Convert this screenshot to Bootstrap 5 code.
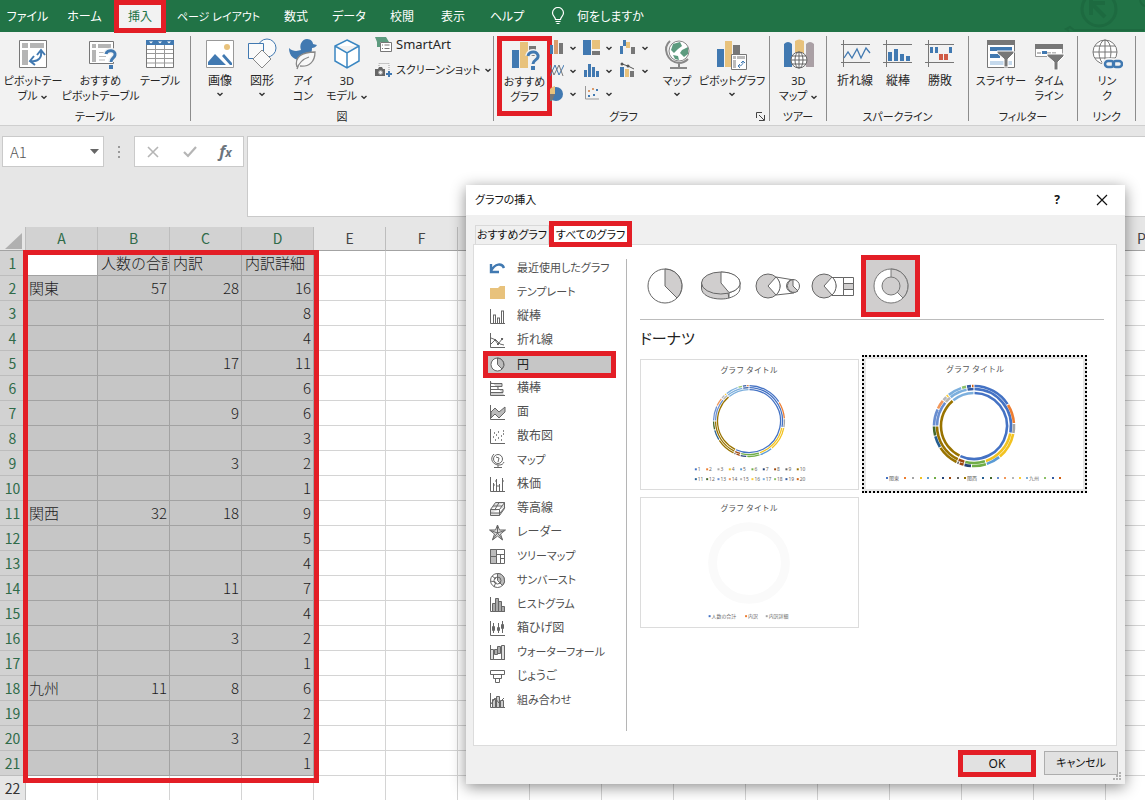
<!DOCTYPE html>
<html lang="ja">
<head>
<meta charset="utf-8">
<meta name="viewport" content="width=device-width, initial-scale=1">
<title>グラフの挿入</title>
<link href="https://cdn.jsdelivr.net/npm/bootstrap@5.3.0/dist/css/bootstrap.min.css" rel="stylesheet">
<style>
:root{--mark-red:#e31e26;--blue:#4179b1;--sand:#e8c27c;--gray:#7f7f7f}
body{font:12px/15px "Noto Sans","Noto Sans CJK JP",sans-serif;font-feature-settings:"palt";color:#262626;background:#e6e6e6;height:100vh;overflow:hidden}
button,input,textarea{font:inherit;color:inherit;font-feature-settings:inherit}
button{background:none;border:0;padding:0}
svg{display:block;flex:none}
button.kana,span.kana{font-size:11px}
/* ribbon tabs */
.menu-strip{background:#217346;height:32px;color:#fff;display:grid;grid-template-columns:55px 59px 52px 105px 50px 56px 50px 52px 56px 1fr auto}
.menu-strip button{height:32px;text-align:center;white-space:nowrap}
.menu-strip .tab-on{height:33px;border:5px solid var(--mark-red);background:#f2f2f2;color:#217346;position:relative}
/* ribbon */
.ribbon{background:#f2f2f2;height:94px;border-bottom:1px solid #cfcfcf}
.rgroup{border-right:1px solid #8c8c8c;margin-top:4px;height:85px;display:flex;flex-direction:column;position:relative}
.rgroup .tools{height:73px;flex:none;display:grid;justify-content:start;align-items:start}
.rgroup .glabel{text-align:center;height:16px;line-height:16px;font-size:11px}
.tool{display:flex;flex-direction:column;align-items:center;text-align:center;white-space:nowrap;padding-top:2px;margin:0 -4px}
.tool svg.big{width:32px;height:32px;margin-bottom:3px}
.hot{border:5px solid var(--mark-red);height:80px;margin:0;padding:0;overflow:hidden;background:#f2f2f2}
.hot svg.big{margin-top:-2px}
.mini{display:grid;grid-template-columns:29px 36px 36px;grid-auto-rows:23px}
.mini button{display:flex;align-items:center;justify-content:end;gap:5px;padding-right:4px}
.w1{width:191px}.w1 .tools{grid-template-columns:66px 69px 50px}
.w2{width:303px}.w2 .tools{grid-template-columns:42px 42px 40px 48px auto;padding-left:8px}
.w3{width:276px}.w3 .tools{grid-template-columns:55px 101px 48px 62px;padding-left:3px}
.w4{width:57px}.w4 .tools{grid-template-columns:57px}
.w5{width:142px}.w5 .tools{grid-template-columns:44px 42px 42px;padding-left:6px}
.w6{width:109px}.w6 .tools{grid-template-columns:48px 48px;padding-left:8px}
.w7{width:58px}.w7 .tools{grid-template-columns:58px}
.smart{font-size:13px}
/* formula bar */
.fbar{padding:10px 0 0 2px;height:101px}
.boxed{background:#fff;border:1px solid #cacaca}
.namebox{width:102px;height:31px}
.namebox input{width:70px;border:0;padding:0 0 0 7px;font-size:15px;color:#555;font-family:"Noto Sans CJK JP",sans-serif;font-weight:300}
.fxbox{width:110px;height:31px}
.formula{height:81px;resize:none;border-right:0;border-radius:0;margin-left:3px}
/* sheet */
.sheet{overflow:hidden;position:relative;flex:1 1 0;min-height:0;font-family:"Noto Sans CJK JP",sans-serif}
.grid{table-layout:fixed;width:1177px;border-collapse:separate;border-spacing:0;font-size:15px;font-weight:300;line-height:24px;font-feature-settings:normal;color:#1c1c1c}
.grid th,.grid td{height:25px;padding:0;border-right:1px solid #d4d4d4;border-bottom:1px solid #d4d4d4;overflow:hidden;white-space:nowrap;background:#fff}
.grid thead th{height:24px;line-height:23px;background:#e6e6e6;text-align:center;font-weight:400;border-color:#bdbdbd;border-bottom-color:#a3a3a3;font-size:14px;color:#444}
.grid thead th.sel,.grid tbody th.sel{background:#d2d2d2;color:#2f6b49}
.grid tbody th{background:#e6e6e6;font-weight:400;text-align:center;font-size:14px;color:#333;border-color:#bdbdbd}
.grid td.sel{background:#c6c6c6;border-color:#a2a2a2}
.grid td.num{text-align:right;padding-right:2px}
.grid td.txt{padding-left:3px}
.grid td.active-cell{background:#fff}
.frame-red{position:absolute;left:23px;top:23px;width:296px;height:533px;border:5px solid var(--mark-red);pointer-events:none}
/* dialog */
.dialog{position:absolute;left:466px;top:185px;width:659px;background:#f0f0f0;box-shadow:0 3px 14px rgba(0,0,0,.45);line-height:18px;color:#111}
.dlg-title{height:30px;background:#fff;padding:0 17px 0 9px}
.dlg-body{padding:6px 8px 5px 7px}
.dlg-tabs{height:23px;padding-left:2px;align-items:end}
.dlg-tabs .tab-off{border:1px solid #d9d9d9;border-bottom:0;height:19px;width:74px;line-height:18px;white-space:nowrap;font-size:11px}
.dlg-tabs .tab-sel{border:5px solid var(--mark-red);background:#fff;width:83px;height:26px;line-height:15px;position:relative;align-self:start;white-space:nowrap;font-size:11px}
.panel{background:#fff;border:1px solid #dcdcdc;height:502px}
.kinds{width:152px;padding:11px 10px 0 9px;margin:0}
.kinds button{display:flex;align-items:center;gap:11px;height:24px;width:133px;padding-left:6px;color:#505050;white-space:nowrap;text-align:left}
.kinds .on{border:5px solid var(--mark-red);background:#c6c6c6;height:27px;margin:-1px 0 -2px;padding-left:1px;color:#222}
.kinds svg{width:17px;height:17px}
.detail{margin-top:14px;height:472px;border-left:1px solid #b5b5b5;padding-left:13px;flex:1;padding-right:12px}
.subtypes{margin-top:-4px;display:grid;grid-template-columns:50px 62px 52px 57px 59px}
.subtypes button{display:flex;align-items:center;justify-content:center;height:62px}
.subtypes .on{border:5px solid var(--mark-red);background:#d0cece}
.rule{border-top:1px solid #bcbcbc;margin-top:2px}
.kind-name{font-size:15px;line-height:26px;margin:5px 0 4px;font-weight:400;color:#222}
.previews{display:grid;grid-template-columns:219px 225px;column-gap:3px}
.pv{height:138px;padding:4px 0;width:219px}
.pv svg,.pv-on svg{border:1px solid #dcdcdc;background:#fff;font-feature-settings:normal}
.pv-on{height:138px;width:225px;border:2px dotted #000;background:#e8e8e8;padding:2px}
.pv-on svg{width:217px;height:130px;border:0}
.dlg-foot{display:flex;justify-content:flex-end;gap:8px;padding-top:4px;margin-right:-1px;height:33px}
.dlg-foot button{background:#e1e1e1;border:1px solid #adadad;width:74px;height:24px;margin-top:1px}
.dlg-foot .ok{border:5px solid var(--mark-red);width:78px;height:27px;line-height:17px;margin-top:0}
.grip{position:absolute;right:3px;bottom:3px}
</style>
</head>
<body class="d-flex flex-column m-0">
<svg width="0" height="0" class="position-absolute">
<defs>
<symbol id="dd" viewBox="0 0 8 8"><path d="M1.500 3 4 5.300 6.500 3" fill="none" stroke="#333" stroke-width="1.400"/></symbol>
</defs>
</svg>

<nav class="menu-strip" aria-label="リボン">
  <button>ファイル</button><button>ホーム</button><button class="tab-on">挿入</button><button class="kana">ページ レイアウト</button><button>数式</button><button>データ</button><button>校閲</button><button>表示</button><button>ヘルプ</button>
  <button class="d-flex align-items-center gap-2 ps-3"><svg width="14" height="18" viewBox="0 0 14 18" fill="none" stroke="#fff" stroke-width="1.200"><path d="M4.500 12.500C4.500 10 1.500 9 1.500 6a5.500 5.500 0 0 1 11 0c0 3-3 4-3 6.500zM4.500 14.500h5M5.500 16.500h3"/></svg><span class="ps-1">何をしますか</span></button>
  <svg width="90" height="32" viewBox="0 0 90 32" fill="none" stroke="#1d6a40"><circle cx="44" cy="9" r="17" stroke-width="3"/><path d="M36 0v15M37 3h13M37 4l13 13" stroke-width="4"/><path d="M14 31l-3-2 4-2 4 3h70M85 0q1 5 5 6" stroke-width="2"/></svg>
</nav>

<header class="ribbon d-flex">
  <section class="rgroup w1"><div class="tools">
    <button class="tool kana"><svg class="big" viewBox="0 0 32 32"><path d="M2.500 2.500h27v27h-27z" fill="#fff" stroke="#777"/><path d="M5 5h6v5H5zM13 5h14v5H13zM5 12h6v15H5z" fill="#b5b5b5"/><path d="M14 23c8 1 11-4 10-10M20 17l4-5 4 5M17 18l-4 5 5 4" fill="none" stroke="#4179b1" stroke-width="2"/></svg>ピボットテー<br><span>ブル <svg class="d-inline" width="8" height="8"><use href="#dd"/></svg></span></button>
    <button class="tool kana"><svg class="big" viewBox="0 0 32 32"><path d="M4.500 3.500h24v22h-24z" fill="#fff" stroke="#777"/><path d="M7 6h4v4H7zM13 6h13v4H13zM7 12h4v12H7z" fill="#b5b5b5"/><path d="M14 14.500h7M14 18.500h7M14 22h6" stroke="#bbb"/><path d="M21 16c1-5 10-4 9 1-.4 3-4 3-4 7" fill="none" stroke="#f2f2f2" stroke-width="6"/><path d="M21 16c1-5 10-4 9 1-.4 3-4 3-4 7" fill="none" stroke="#4179b1" stroke-width="3"/><path d="M24 27h4v4h-4z" fill="#4179b1"/></svg>おすすめ<br>ピボットテーブル</button>
    <button class="tool kana"><svg class="big" viewBox="0 0 32 32"><path d="M2.500 2.500h27v27h-27z" fill="#fff" stroke="#777"/><path d="M2 2h28v5H2z" fill="#4179b1"/><path d="M5 3.500h4l-2 2zM14 3.500h4l-2 2zM23 3.500h4l-2 2z" fill="#fff"/><path d="M11.500 7v22M20.500 7v22M3 11.500h26M3 15.500h26M3 20.500h26M3 25h26" stroke="#999"/></svg>テーブル</button>
  </div><div class="glabel">テーブル</div></section>

  <section class="rgroup w2"><div class="tools">
    <button class="tool"><svg class="big" viewBox="0 0 32 32"><path d="M2.500 2.500h27v27h-27z" fill="#fff" stroke="#999"/><circle cx="23" cy="9" r="3" fill="#e8c27c"/><path d="M4 27v-3l7-8 11 11zM18 18l2-2 8 9v2h-2z" fill="#4179b1"/></svg>画像<svg width="8" height="12"><use href="#dd"/></svg></button>
    <button class="tool"><svg class="big" viewBox="0 0 32 32" fill="#fafafa" stroke="#4179b1"><circle cx="21" cy="10" r="9"/><path d="M2.500 5.500h15v15h-15z"/><path d="M16 12l9 9-9 9-9-9z" stroke="#888"/></svg>図形<svg width="8" height="12"><use href="#dd"/></svg></button>
    <button class="tool kana"><svg class="big" viewBox="0 0 32 32"><path d="M2 10c4 4 9 3 12 2-2-5 1-11 6-11 4 0 6 3 6 5l4 1c-1 2-3 3-5 3 0 4-1 7-4 10-6 4-19 3-19-10z" fill="#4179b1"/><path d="M10 29c-3-10 5-15 18-15 0 10-6 15-15 14M10 31c2-7 6-10 12-12" fill="#f8f8f8" stroke="#888" stroke-width="1.300"/></svg>アイ<br>コン</button>
    <button class="tool kana"><svg class="big" viewBox="0 0 32 32" fill="#fff" stroke="#3b87c2" stroke-width="1.500"><path d="M16 2l12 6v15l-12 7-12-7V8zM4 8l12 7 12-7M16 15v15"/></svg>3D<br><span>モデル <svg class="d-inline" width="8" height="8"><use href="#dd"/></svg></span></button>
    <div class="ps-1">
      <button class="d-flex align-items-center gap-1 smart pb-2"><svg width="17" height="17" viewBox="0 0 17 17"><path d="M0 1h11l3 5H5v5H2V6z" fill="#5d9b7f"/><path d="M5.500 6.500h11v9h-11z" fill="#fff" stroke="#777"/><path d="M7 9h1M9.500 9h5M7 12.500h1M9.500 12.500h5" stroke="#777"/></svg>SmartArt</button>
      <button class="d-flex align-items-center gap-1 text-nowrap kana"><svg width="17" height="17" viewBox="0 0 17 17"><path d="M4 5V2.500h10V10" fill="none" stroke="#999" stroke-dasharray="1 1"/><path d="M0 8h3l1-2h3l1 2h2v7H0z" fill="#666"/><circle cx="5.500" cy="11.500" r="2" fill="#eee" stroke="#999"/><path d="M11 13h6M14 10v6" stroke="#4179b1" stroke-width="2"/></svg>スクリーンショット <svg width="8" height="8"><use href="#dd"/></svg></button>
    </div>
  </div><div class="glabel">図</div></section>

  <section class="rgroup w3"><div class="tools">
    <button class="tool hot kana"><svg class="big" viewBox="0 0 32 32"><path d="M3 11h7v18H3z" fill="#4179b1"/><path d="M11 3h8v26h-8z" fill="#e8c27c"/><path d="M20 7h7v10h-7z" fill="#777"/><path d="M19 17c1-6 11-5 10 1-.4 3-5 3-5 7" fill="none" stroke="#f2f2f2" stroke-width="6"/><path d="M19 17c1-6 11-5 10 1-.4 3-5 3-5 7" fill="none" stroke="#4179b1" stroke-width="3"/><path d="M22 27h4v4h-4z" fill="#4179b1"/></svg>おすすめ<br>グラフ</button>
    <div class="mini">
      <button aria-label="縦棒"><svg width="14" height="17" viewBox="3 0 14 17"><path d="M2 6h4v9H2z" fill="#4179b1"/><path d="M7 1h4v14H7z" fill="#d99b6c"/><path d="M12 4h4v11h-4z" fill="#777"/></svg><svg width="8" height="8"><use href="#dd"/></svg></button>
      <button aria-label="階層"><svg width="17" height="17"><path d="M0 1h8v15H0z" fill="#4179b1"/><path d="M9 1h8v9H9z" fill="#e8c27c"/><path d="M9 12h8v4H9z" fill="#777"/></svg><svg width="8" height="8"><use href="#dd"/></svg></button>
      <button aria-label="ウォーターフォール"><svg width="17" height="17"><path d="M1 7h3v8H1zM4 1h3v6H4z" fill="#4179b1"/><path d="M7 3h4v6H7z" fill="#e8c27c"/><path d="M12 8h4v7h-4z" fill="#777"/></svg><svg width="8" height="8"><use href="#dd"/></svg></button>
      <button aria-label="折れ線"><svg width="14" height="17" fill="none"><path d="M0 14 5 3l4 10 5-10" stroke="#4179b1"/><path d="M0 3l4 10 5-10 4 11" stroke="#777"/></svg><svg width="8" height="8"><use href="#dd"/></svg></button>
      <button aria-label="統計"><svg width="17" height="17"><path d="M1 8h3v7H1zM5 2h3v13H5zM9 5h3v10H9zM13 9h3v6h-3z" fill="#4179b1"/></svg><svg width="8" height="8"><use href="#dd"/></svg></button>
      <button aria-label="複合"><svg width="17" height="17"><path d="M1 5h4v10H1z" fill="#4179b1"/><path d="M6 7h4v8H6z" fill="#e8c27c"/><path d="M11 9h4v6h-4z" fill="#777"/><path d="M3 2l6 2 6 3" stroke="#555" fill="none"/><circle cx="3" cy="2" r="1.500" fill="#555"/><circle cx="9" cy="4" r="1.500" fill="#555"/></svg><svg width="8" height="8"><use href="#dd"/></svg></button>
      <button aria-label="円"><svg width="14" height="17"><circle cx="6" cy="9" r="7" fill="#4179b1"/><path d="M5 9V1a8 8 0 0 0-5 3v5z" fill="#e8c27c"/><path d="M0 9h5l-3 7H0z" fill="#777"/></svg><svg width="8" height="8"><use href="#dd"/></svg></button>
      <button aria-label="散布図"><svg width="17" height="17"><path d="M2.500 1v13H16" fill="none" stroke="#999"/><path d="M5 10h2v2H5zM10 9h2v2h-2zM13 4h2v2h-2z" fill="#4179b1"/><path d="M5 5h2v2H5zM9 3h2v2H9z" fill="#d99b6c"/></svg><svg width="8" height="8"><use href="#dd"/></svg></button>
    </div>
    <button class="tool kana"><svg class="big" viewBox="0 0 32 32"><circle cx="18" cy="13" r="10" fill="#fff" stroke="#888"/><path d="M12 6l7-2 2 4-4 3-4 4-3-3zM21 12l6-3v7l-4 3-4-4zM12 17l5 1 1 4-4-1z" fill="#5d9b7f"/><path d="M9 3C1 10 6 24 18 25c4 0 7-2 9-4M18 25v4M9 30h17" fill="none" stroke="#888" stroke-width="2"/></svg>マップ<svg width="8" height="12"><use href="#dd"/></svg></button>
    <button class="tool kana"><svg class="big" viewBox="0 0 32 32"><path d="M1 11h7v18H1z" fill="#4179b1"/><path d="M9 3h7v26H9z" fill="#e8c27c"/><path d="M17 7h7v10h-7z" fill="#777"/><path d="M15.500 16.500h15v15h-15z" fill="#fff" stroke="#777"/><path d="M17 18h3v3h-3zM21 18h8v3h-8zM17 22h3v8h-3z" fill="#bbb"/><path d="M22 28c4 0 5-2 5-4M25 25l2-2 2 2M24 26l-2 2 2 2" fill="none" stroke="#4179b1"/></svg>ピボットグラフ<svg width="8" height="12"><use href="#dd"/></svg></button>
  </div><div class="glabel pe-3">グラフ</div>
  <svg class="position-absolute bottom-0 end-0 me-1" width="9" height="9" fill="none" stroke="#444"><path d="M.500 6V.500H6M3 3l5 5M8.500 3v5.500H3"/></svg></section>

  <section class="rgroup w4"><div class="tools">
    <button class="tool kana"><svg class="big" viewBox="0 0 32 32"><path d="M1 29V6q4-4 8 0v23z" fill="#4179b1"/><path d="M12 20V3q4-3 9 0v17z" fill="#e8c27c"/><path d="M23 29V6q4-4 8 0v23z" fill="#aaa0a5"/><g fill="#fff" stroke="#666"><circle cx="16" cy="22" r="8"/><ellipse cx="16" cy="22" rx="4" ry="8" fill="none"/><path d="M8 22h16M9 18h14M9 26h14M16 14v16"/></g></svg>3D<br><span>マップ <svg class="d-inline" width="8" height="8"><use href="#dd"/></svg></span></button>
  </div><div class="glabel">ツアー</div></section>

  <section class="rgroup w5"><div class="tools">
    <button class="tool"><svg class="big" viewBox="0 0 32 32" fill="none"><path d="M2 6.500h29M2 24.500h29M4.500 2v27" stroke="#777"/><path d="M5 20l4-6 4 6 5-9 4 9 5-10 4 5" stroke="#4179b1" stroke-width="1.300"/></svg>折れ線</button>
    <button class="tool"><svg class="big" viewBox="0 0 32 32"><path d="M1 6.500h29M1 24.500h29M4.500 2v27" stroke="#777"/><path d="M6 14h4v9H6zM12 11h4v12h-4zM18 16h4v7h-4zM24 18h4v5h-4z" fill="#4179b1"/></svg>縦棒</button>
    <button class="tool"><svg class="big" viewBox="0 0 32 32"><path d="M1 6.500h29M1 24.500h29M4.500 2v27" stroke="#777"/><path d="M6 9h3v6H6zM11 9h3v6h-3zM25 9h3v6h-3z" fill="#4179b1"/><path d="M15 16h4v6h-4zM20 16h4v6h-4z" fill="#cf5a45"/></svg>勝敗</button>
  </div><div class="glabel">スパークライン</div></section>

  <section class="rgroup w6"><div class="tools">
    <button class="tool kana"><svg class="big" viewBox="0 0 32 32"><path d="M2.500 2.500h27v27h-27z" fill="#fff" stroke="#777"/><path d="M2 2h28v5H2z" fill="#777"/><path d="M5 9h22v4H5zM5 16h10v4H5z" fill="#4179b1"/><path d="M5 23h22v4H5z" fill="#c5d9ec"/><path d="M12 13h17v2l-6 6v8h-4v-8l-7-6z" fill="#777" stroke="#fff"/></svg>スライサー</button>
    <button class="tool kana"><svg class="big" viewBox="0 0 32 32"><path d="M2.500 6.500h27v12h-27z" fill="#fff" stroke="#999"/><path d="M2 6h28v5H2z" fill="#777"/><path d="M4 14h4v2H4zM14 14h4v2h-4zM19 14h4v2h-4z" fill="#bbb"/><path d="M9 13h5v3H9z" fill="#4179b1"/><path d="M14 16h17v2l-6 6v8h-4v-8l-7-6z" fill="#777" stroke="#fff"/></svg>タイム<br>ライン</button>
  </div><div class="glabel">フィルター</div></section>

  <section class="rgroup w7"><div class="tools">
    <button class="tool kana"><svg class="big" viewBox="0 0 32 32" fill="none" stroke="#777"><circle cx="14" cy="14" r="12" fill="#fff"/><ellipse cx="14" cy="14" rx="6" ry="12"/><path d="M14 2v24M2 14h24M4 8h20M4 20h20"/><g stroke="#f2f2f2" stroke-width="6"><rect x="14" y="23" width="9" height="6" rx="3"/><rect x="22" y="23" width="9" height="6" rx="3"/></g><g stroke="#4179b1" stroke-width="2.500"><rect x="14" y="23" width="9" height="6" rx="3"/><rect x="22" y="23" width="9" height="6" rx="3"/></g></svg>リン<br>ク</button>
  </div><div class="glabel">リンク</div></section>
</header>

<div class="fbar d-flex align-items-start">
  <div class="boxed namebox d-flex align-items-center justify-content-between pe-1"><input value="A1" aria-label="名前ボックス"><svg width="9" height="9"><path d="M0 2h9L4.500 7z" fill="#666"/></svg></div>
  <svg width="30" height="31"><path d="M14 10h2v2h-2zM14 15h2v2h-2zM14 20h2v2h-2z" fill="#999"/></svg>
  <div class="boxed fxbox d-flex align-items-center justify-content-around">
    <button aria-label="キャンセル"><svg width="14" height="14" stroke="#b5b5b5" stroke-width="1.600"><path d="M2 2l10 10M12 2 2 12"/></svg></button>
    <button aria-label="入力"><svg width="14" height="14" fill="none" stroke="#b5b5b5" stroke-width="2.200"><path d="M1 7l4 4 8-9"/></svg></button>
    <button aria-label="関数の挿入" class="font-serif-fx text-secondary"><i class="fs-6 fw-bold font-monospace-0">f</i><i class="fw-bold">x</i></button>
  </div>
  <textarea class="boxed formula flex-grow-1" aria-label="数式バー"></textarea>
</div>

<main class="sheet"><table class="grid"><colgroup id="cols"></colgroup><thead><tr id="heads"></tr></thead><tbody id="cells"></tbody></table><div class="frame-red"></div></main>

<div class="dialog" role="dialog" aria-label="グラフの挿入">
  <div class="dlg-title d-flex align-items-center"><span class="me-auto kana">グラフの挿入</span>
    <button class="fw-bold me-4 pe-2" aria-label="ヘルプ">?</button>
    <button class="ms-1" aria-label="閉じる"><svg width="12" height="12" stroke="#111" stroke-width="1.200"><path d="M1 1l10 10M11 1 1 11"/></svg></button></div>
  <div class="dlg-body">
    <div class="dlg-tabs d-flex"><button class="tab-off">おすすめグラフ</button><button class="tab-sel">すべてのグラフ</button></div>
    <div class="panel d-flex">
      <div class="kinds" id="kinds"></div>
      <div class="detail">
        <div class="subtypes">
          <button aria-label="円"><svg width="36" height="36" stroke="#666" fill="#fff"><circle cx="18" cy="18" r="17"/><path d="M18 18V1a17 17 0 0 1 12 29z" fill="#d0cece"/></svg></button>
          <button aria-label="3-D 円"><svg width="42" height="32" viewBox="0 0 42 32" stroke="#666" fill="#d0cece"><path d="M1.500 13v5c0 7 9 11 19.500 11 3 0 6-.4 8-1l-1-5z"/><path d="M29 23v5c7-2 11-5.500 11-10v-5z" fill="#fff"/><ellipse cx="20.800" cy="13" rx="19.300" ry="11"/><path d="M21 13V2c11 0 19 5 19 11 0 4-4 8-11 9.500z" fill="#fff"/></svg></button>
          <button aria-label="補助円グラフ付き円"><svg width="46" height="28" viewBox="0 0 46 28" stroke="#666" fill="#d0cece"><circle cx="13" cy="14" r="12"/><path d="M13 14l8-9a12 12 0 0 1 0 18z" fill="#fff"/><path d="M21 5l18 3M21 23l18-2" fill="none"/><circle cx="38" cy="14" r="6.500" fill="#fff"/><path d="M38 14l5 5a6.500 6.500 0 1 1-5-11.500z"/></svg></button>
          <button aria-label="補助縦棒付き円"><svg width="44" height="28" viewBox="0 0 44 28" stroke="#666" fill="#d0cece"><circle cx="13" cy="14" r="12"/><path d="M13 14l8-9a12 12 0 0 1 0 18z" fill="#fff"/><path d="M21 5.500h12M21 23.500h12" fill="none"/><path d="M32.500 5.500h10v18h-10z" fill="#fff"/><path d="M32.500 11.500h10v6h-10z"/></svg></button>
          <button class="on" aria-label="ドーナツ"><svg width="36" height="36" stroke="#777" fill="#fff"><circle cx="18" cy="18" r="17"/><path d="M18 18V1a17 17 0 0 1 12 29z" fill="#d0cece"/><circle cx="18" cy="18" r="9" fill="#d0cece"/></svg></button>
        </div>
        <div class="rule"></div>
        <h2 class="kind-name">ドーナツ</h2>
        <div class="previews">
          <button class="pv" aria-label="ドーナツ 1"><svg id="chart1" width="219" height="131" viewBox="0 0 219 131"></svg></button>
          <button class="pv-on" aria-label="ドーナツ 2"><svg id="chart2" width="217" height="130" viewBox="0 0 217 130"></svg></button>
          <button class="pv" aria-label="ドーナツ 3"><svg id="chart3" width="219" height="131" viewBox="0 0 219 131"></svg></button>
        </div>
      </div>
    </div>
    <div class="dlg-foot"><button class="ok">OK</button><button class="kana">キャンセル</button></div>
  </div>
  <svg class="grip" width="9" height="9" fill="#b0b0b0"><path d="M6 0h2v2H6zM3 3h2v2H3zM6 3h2v2H6zM0 6h2v2H0zM3 6h2v2H3zM6 6h2v2H6z"/></svg>
</div>

<script>
// Sheet contents, one entry for each row: A, B, C, D
const rows=[['','人数の合計','内訳','内訳詳細'],['関東',57,28,16],['','','',8],['','','',4],['','',17,11],['','','',6],['','',9,6],['','','',3],['','',3,2],['','','',1],['関西',32,18,9],['','','',5],['','','',4],['','',11,7],['','','',4],['','',3,2],['','','',1],['九州',11,8,6],['','','',2],['','',3,2],['','','',1]];
const letters='ABCDEFGHIJKLMNOP'.split(''), $=id=>document.getElementById(id);
$('cols').innerHTML='<col style="width:26px">'+letters.map(()=>'<col style="width:72px">').join('');
$('heads').innerHTML='<th><svg width="25" height="22"><path d="M22 5v16H5z" fill="#b0b0b0"/></svg></th>'+letters.map((l,i)=>`<th class="${i<4?'sel':''}">${l}</th>`).join('');
let html='';
for(let r=0;r<22;r++){
  html+=`<tr><th class="${r<21?'sel':''}">${r+1}</th>`;
  letters.forEach((l,c)=>{
    const v=rows[r]&&c<4?rows[r][c]:'';
    html+=`<td class="${r<21&&c<4?'sel':''} ${typeof v==='number'?'num':'txt'} ${r+c===0?'active-cell':''}">${v}</td>`;
  });
  html+='</tr>';
}
$('cells').innerHTML=html;

// Chart kinds with 17px line icons
const ax='<path d="M1.500 1v14.500H16" fill="none"/>';
const kinds=[
['最近使用したグラフ','<path d="M2 4v8h8M2 11C6 3 13 3 15 8" fill="none" stroke="#4179b1" stroke-width="2.400"/>'],
['テンプレート','<path d="M1 4h8l2-2h5v13H1z" fill="#e8c27c" stroke="none"/>'],
['縦棒',ax+'<path d="M4.500 7v8.500M6.500 7v8.500M4 7h3M8.500 10v5M10.500 10v5M8 10h3M12.500 3v12M14.500 3v12M12 3h3" fill="none"/>'],
['折れ線',ax+'<path d="M2 12l4-4 3 4 5-6M2 6l5 2 4 4 4 1" fill="none"/><path d="M5 7h2v2H5zM8 11h2v2H8zM12 6h2v2h-2z" fill="#666" stroke="none"/>'],
['円','<circle cx="8.500" cy="8.500" r="6.500" fill="#fff"/><path d="M8.500 8.500V2a6.500 6.500 0 0 1 4.500 11z" fill="#bbb"/>'],
['横棒','<path d="M1.500 1v14.500H16M2 3.500h11v3H2M2 6.500h7v3H2M2 9.500h12v3H2" fill="#ccc"/>'],
['面','<path d="M2 8l4-4 4 4 6-5v5l-6 6-4-4-4 4z" fill="#bbb"/>'+ax],
['散布図',ax+'<path d="M4 9h1M6 12h1M7 7h1M9 10h1M9 4h1M12 8h1M12 12h1M14 3h1M14 6h1M5 5h1" stroke-width="1.500"/>'],
['マップ','<circle cx="9" cy="7" r="4.500" fill="#fff"/><path d="M7 5l3 1-1 4M5 2c-5 5-1 11 5 11 3 0 4-1 5-3M9 13v2.500M5 15.500h8" fill="none"/>'],
['株価',ax+'<path d="M4.500 7v8M7.500 3v12M10.500 8v7M13.500 2v13M6 5h2M7 10h3M13 5h2M4 9h2" fill="none"/>'],
['等高線','<path d="M1.500 9.500l5-7h9v6l-5 7h-9zM1.500 9.500h9l5-7M10.500 9.500v6M4 6h9M6 9.500l4-7M2 13h9l5-6" fill="#ddd"/>'],
['レーダー','<path d="M8.500 1l2 5h6l-5 4 2 6-5-4-5 4 2-6-5-4h6z" fill="#ddd"/><path d="M8.500 1.500V9l-7-2.500M8.500 9l7-2.500M8.500 9l-5 6.500M8.500 9l5 6.500" fill="none"/>'],
['ツリーマップ','<path d="M1.500 1.500h14v14h-14z" fill="#fff"/><path d="M1.500 1.500h6v7h-6zM1.500 8.500h6v7h-6z" fill="#bbb"/><path d="M7.500 6.500h8M11.500 6.500v9M11.500 10.500h4" fill="none"/>'],
['サンバースト','<circle cx="8.500" cy="8.500" r="7" fill="#fff"/><path d="M8.500 8.500v-7a7 7 0 0 1 5 12z" fill="#bbb"/><circle cx="8.500" cy="8.500" r="3.500" fill="none"/><path d="M1.500 9l5 1M5 15l2-5M3 4l4 3" fill="none"/>'],
['ヒストグラム',ax+'<path d="M3.500 7.500h3v8h-3zM6.500 2.500h3v13h-3zM9.500 5.500h3v10h-3zM12.500 10.500h3v5h-3z" fill="#aaa"/>'],
['箱ひげ図',ax+'<path d="M4.500 3v10M9.500 3v10M13.500 1v12M3.500 6.500h2v4h-2zM8.500 7.500h2v3h-2zM12.500 4.500h2v4h-2z" fill="#fff"/>'],
['ウォーターフォール',ax+'<path d="M1.500 5.500h3v10h-3zM12.500 1.500h3v14h-3z" fill="#ddd"/><path d="M5.500 5.500h3v5h-3zM8.500 2.500h3v7h-3z" fill="#aaa"/>'],
['じょうご','<path d="M1.500 2.500h14v4h-14zM4.500 6.500h8v4h-8zM6.500 10.500h4v4h-4z" fill="#fff"/>'],
['組み合わせ',ax+'<path d="M3.500 7.500h3v8h-3zM7.500 4.500h3v11h-3zM11.500 8.500h3v7h-3z" fill="#ccc"/><path d="M2 12l4-6 4 5 5-5" fill="none"/>']];
$('kinds').innerHTML=kinds.map(([n,s])=>`<button class="${n==='円'?'on':''} ${/[ァ-ヴ]{2}/.test(n)||n.length>4?'kana':''}"><svg viewBox="0 0 17 17" stroke="#666">${s}</svg>${n}</button>`).join('');

// Doughnut previews, drawn from the sheet columns (each adds up to 100)
const pal=['#4472C4','#ED7D31','#A5A5A5','#F2C220','#5B9BD5','#70AD47','#264478','#9E480E','#636363','#997300','#255E91','#43682B','#698ED0','#F1975A','#B7B7B7','#FFCD33','#7CAFDD','#8CC168','#335AA1','#D26012'];
function rings(cx,cy,radii,w){
  let s='';
  radii.forEach((r,k)=>{
    let at=0;
    rows.slice(1).forEach((row,i)=>{
      const v=row[k+1];
      if(!v)return;
      const a=at/50*Math.PI+.5/r,b=(at+v)/50*Math.PI-.5/r;
      s+=`<path d="M${cx+r*Math.sin(a)} ${cy-r*Math.cos(a)}A${r} ${r} 0 ${b-a>Math.PI?1:0} 1 ${cx+r*Math.sin(b)} ${cy-r*Math.cos(b)}" fill="none" stroke="${pal[i]}" stroke-width="${w}"/>`;
      at+=v;
    });
  });
  return s;
}
const title='<text x="109" y="13" font-size="8" text-anchor="middle" fill="#555">グラフ タイトル</text>';
const key=(x,y,c,t)=>`<rect x="${x}" y="${y-3}" width="2" height="2" fill="${c}"/><text x="${x+3}" y="${y}" font-size="5" fill="#666">${t}</text>`;
let c1=title+rings(109,62,[32,34,36],1.3);
for(let i=0;i<20;i++)c1+=key(54+i%10*11.5,i<10?113:123,pal[i],i+1);
$('chart1').innerHTML=c1;
let c2=title+rings(108,67,[33,37,40],2.6);
const keyX=[20,38,46,54,61,68,76,83,91,98,116,124,131,138,146,153,160,178,186,193];
keyX.forEach((x,i)=>c2+=key(x,121,pal[i],rows[i+1][0]));
$('chart2').innerHTML=c2;
$('chart3').innerHTML=title+'<circle cx="109" cy="66" r="37" fill="none" stroke="#fafafa" stroke-width="9"/>'+key(68,122,pal[0],'人数の合計')+key(105,122,pal[1],'内訳')+key(126,122,pal[2],'内訳詳細');
</script>
<script src="https://cdn.jsdelivr.net/npm/bootstrap@5.3.0/dist/js/bootstrap.bundle.min.js"></script>
</body>
</html>
